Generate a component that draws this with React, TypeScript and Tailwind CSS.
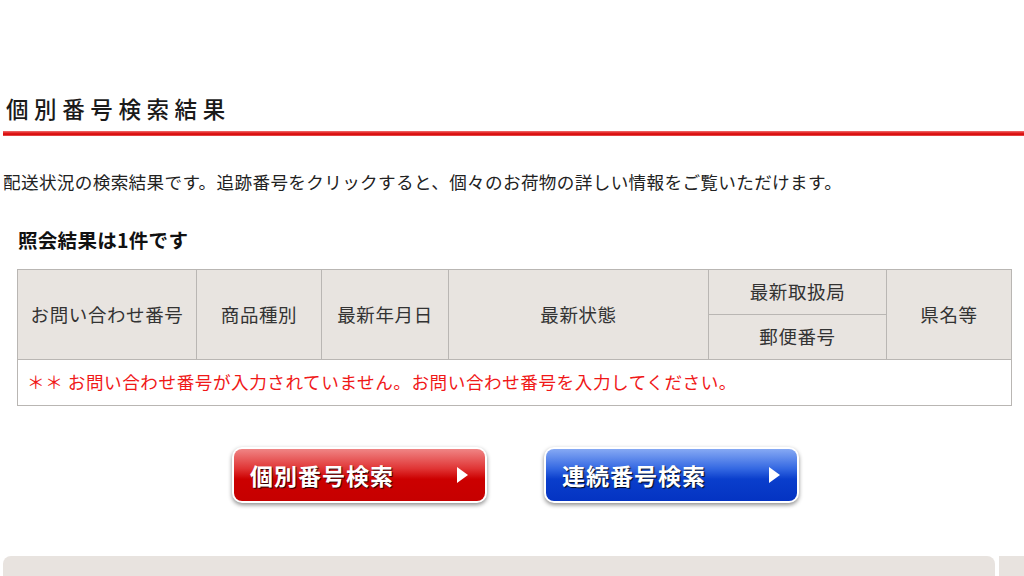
import React from "react";

const jp = { fontFamily: '"Noto Sans CJK JP", "Noto Sans", sans-serif' };

function Btn({ label, kind }: { label: string; kind: "red" | "blue" }) {
  const bg =
    kind === "red"
      ? "bg-[linear-gradient(180deg,#f08585_0%,#e03434_38%,#cc0000_58%,#c60000_100%)]"
      : "bg-[linear-gradient(180deg,#86a9f4_0%,#3468e2_38%,#0a3ecc_58%,#0433c2_100%)]";
  return (
    <div className="rounded-[10px] bg-white p-[2px] shadow-[0_2px_4px_rgba(0,0,0,0.45)]">
      <div
        className={`flex h-[52px] w-[251px] items-center justify-between rounded-[8px] pl-[16px] pr-[17px] ${bg}`}
      >
        <span
          className="text-[23px] font-bold tracking-[1px] text-white [text-shadow:1px_1px_1px_rgba(0,0,0,0.85)]"
          style={jp}
        >
          {label}
        </span>
        <span className="h-0 w-0 border-y-[8px] border-l-[11px] border-y-transparent border-l-white" />
      </div>
    </div>
  );
}

export default function App() {
  const th =
    "border border-[#b9b6b3] bg-[#e8e4e0] text-center align-middle font-normal text-[18.5px] tracking-[0.6px] text-[#333]";
  return (
    <div className="h-[576px] w-[1024px] overflow-hidden bg-white text-[#222]" style={jp}>
      <div className="pt-[93px]">
        <h1 className="pl-[6px] text-[22.5px] font-medium leading-[30px] tracking-[5.6px] text-[#1a1a1a]">
          個別番号検索結果
        </h1>
        <div className="ml-[3px] mt-[8px] h-[5px] bg-[linear-gradient(180deg,#f07070_0%,#e01818_45%,#d80f0f_70%,#e85a5a_100%)]" />
        <p className="mt-[34px] pl-[3px] text-[17.6px] leading-[24px] tracking-[0.35px] text-[#222]">
          配送状況の検索結果です。追跡番号をクリックすると、個々のお荷物の詳しい情報をご覧いただけます。
        </p>
        <p className="mt-[34px] pl-[18px] text-[19.5px] font-bold leading-[24px] tracking-[0.3px] text-[#111]">
          照会結果は1件です
        </p>
        <div className="mt-[17px] pl-[17px]">
          <table className="w-[994px] table-fixed border-collapse">
            <colgroup>
              <col className="w-[179px]" />
              <col className="w-[125px]" />
              <col className="w-[127px]" />
              <col className="w-[260px]" />
              <col className="w-[178px]" />
              <col className="w-[125px]" />
            </colgroup>
            <thead>
              <tr className="h-[45px]">
                <th rowSpan={2} className={th}>お問い合わせ番号</th>
                <th rowSpan={2} className={th}>商品種別</th>
                <th rowSpan={2} className={th}>最新年月日</th>
                <th rowSpan={2} className={th}>最新状態</th>
                <th className={th}>最新取扱局</th>
                <th rowSpan={2} className={th}>県名等</th>
              </tr>
              <tr className="h-[45px]">
                <th className={th}>郵便番号</th>
              </tr>
            </thead>
            <tbody>
              <tr className="h-[46px]">
                <td
                  colSpan={6}
                  className="border border-[#b9b6b3] pl-[9px] text-[17.6px] tracking-[0.55px] text-[#f01818]"
                >
                  ＊＊ お問い合わせ番号が入力されていません。お問い合わせ番号を入力してください。
                </td>
              </tr>
            </tbody>
          </table>
        </div>
        <div className="mt-[41px] flex gap-[57px] pl-[232px]">
          <Btn label="個別番号検索" kind="red" />
          <Btn label="連続番号検索" kind="blue" />
        </div>
        <div className="mt-[53px] flex gap-[4px] pl-[3px]">
          <div className="h-[40px] w-[992px] rounded-t-[8px] bg-[#e8e3df]" />
          <div className="h-[40px] flex-1 bg-[#e8e3df]" />
        </div>
      </div>
    </div>
  );
}
